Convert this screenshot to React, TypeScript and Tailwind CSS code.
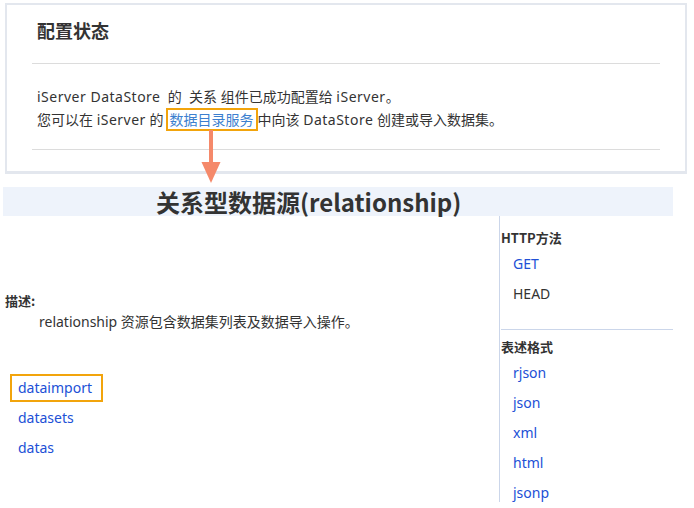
import React from "react";

const font = { fontFamily: '"Noto Sans", "Noto Sans CJK SC", sans-serif' };
const cjk = { fontFamily: '"Noto Sans CJK SC", "Noto Sans", sans-serif' };

function L({ children }: { children: React.ReactNode }) {
  return <span className="tracking-[0.5px]">{children}</span>;
}

export default function App() {
  return (
    <div className="relative w-[694px] h-[508px] bg-white text-[#333] overflow-hidden" style={font}>
      {/* Top card */}
      <div className="ml-[5px] mt-[3px] w-[682px] h-[171px] border-2 border-b-[3px] border-[#e3e7ee] bg-white">
        <div className="pl-[30px] pt-[12px] text-[18px] leading-[26px] font-bold text-[#333]" style={cjk}>配置状态</div>
        <div className="mx-[25px] mt-[20px] h-px bg-[#dcdcdc]" />
        <div className="pl-[30px] pt-[22px] text-[14px] leading-[22px] text-[#333] whitespace-nowrap">
          <div>
            <L>iServer DataStore</L>&nbsp; 的&nbsp; 关系&nbsp;组件已成功配置给&nbsp;<L>iServer</L>。
          </div>
          <div className="flex items-center">
            <span>您可以在 <L>iServer</L> 的</span>
            <span className="ml-[2px] border-2 border-[#f2a40c] pl-[2px] pr-[2px] leading-[19px] text-[#3c7fcf]">数据目录服务</span>
            <span>中向该 <L>DataStore</L> 创建或导入数据集。</span>
          </div>
        </div>
        <div className="mx-[25px] mt-[18px] h-px bg-[#dcdcdc]" />
      </div>

      {/* Arrow overlay */}
      <svg className="absolute left-[200px] top-[130px]" width="22" height="56" viewBox="0 0 22 56">
        <rect x="9" y="0" width="4" height="37" fill="#f5896a" />
        <polygon points="1.5,32 20.5,32 11,53" fill="#f5896a" />
      </svg>

      {/* Heading band */}
      <div className="ml-[3px] mt-[13px] w-[670px] h-[29px] bg-[#eef3fb] pl-[153px] text-[24px] leading-[29px] font-bold text-[#333] whitespace-nowrap" style={cjk}>
        关系型数据源(relationship)
      </div>

      {/* Columns */}
      <div className="flex">
        <div className="w-[499px]">
          <div className="pl-[5px] pt-[76px] text-[13px] leading-[18px] font-bold" style={cjk}>描述:</div>
          <div className="pl-[39px] pt-[2px] text-[14px] leading-[20px]">relationship 资源包含数据集列表及数据导入操作。</div>
          <div className="pt-[42px] pl-[10px] text-[14px] text-[#2150d6]">
            <div className="w-[93px] h-[28px] border-2 border-[#f2a40c] pl-[6px] leading-[24px]">dataimport</div>
            <div className="pl-[8px] h-[30px] leading-[30px] mt-px">datasets</div>
            <div className="pl-[8px] h-[30px] leading-[30px]">datas</div>
          </div>
        </div>
        <div className="w-[174px] h-[286px] border-l border-[#cbd6ea] pl-px">
          <div className="pt-[13px] text-[13px] leading-[18px] font-bold" style={cjk}>HTTP方法</div>
          <div className="mt-[2px] pl-[12px] text-[14px]">
            <div className="h-[30px] leading-[30px] text-[#2150d6]">GET</div>
            <div className="h-[30px] leading-[30px]">HEAD</div>
          </div>
          <div className="mt-[20px] h-px bg-[#cbd6ea]" />
          <div className="pt-[8px] text-[13px] leading-[18px] font-bold" style={cjk}>表述格式</div>
          <div className="mt-[2px] pl-[12px] text-[14px] text-[#2150d6]">
            <div className="h-[30px] leading-[30px]">rjson</div>
            <div className="h-[30px] leading-[30px]">json</div>
            <div className="h-[30px] leading-[30px]">xml</div>
            <div className="h-[30px] leading-[30px]">html</div>
            <div className="h-[30px] leading-[30px]">jsonp</div>
          </div>
        </div>
      </div>
    </div>
  );
}
